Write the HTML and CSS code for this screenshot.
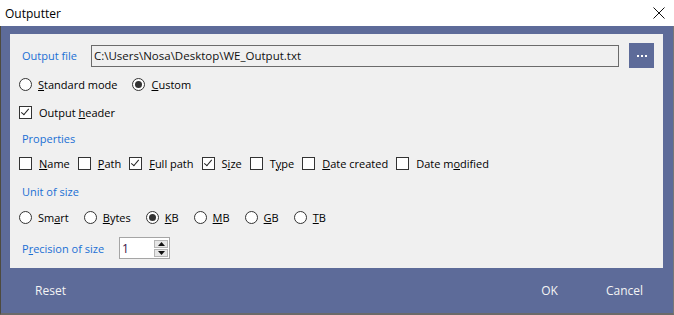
FILE: index.html
```html
<!DOCTYPE html>
<html lang="en">
<head>
    <meta charset="UTF-8">
    <meta name="viewport" content="width=device-width, initial-scale=1.0">
    <title>Outputter</title>
    <link rel="stylesheet" href="styles.css">
</head>
<body>
    <div class="window">
        <div class="titlebar">
            <span class="title">Outputter</span>
            <span class="close">
                <svg width="12" height="12" viewBox="0 0 12 12"><path d="M0.5 0.5 L11.5 11.5 M11.5 0.5 L0.5 11.5" stroke="#111" stroke-width="1" fill="none"/></svg>
            </span>
        </div>

        <div class="client">
            <div class="panel">
                <div class="row file-row">
                    <span class="caption">Output file</span>
                    <div class="path-box">C:\Users\Nosa\Desktop\WE_Output.txt</div>
                    <button class="browse"><span></span><span></span><span></span></button>
                </div>

                <div class="row mode-row">
                    <label class="opt radio"><span class="circle"></span><span><u>S</u>tandard mode</span></label>
                    <label class="opt radio"><span class="circle on"></span><span><u>C</u>ustom</span></label>
                </div>

                <div class="row header-row">
                    <label class="opt check"><span class="box on"></span><span>Output <u>h</u>eader</span></label>
                </div>

                <div class="row caption-row">
                    <span class="caption">Properties</span>
                </div>

                <div class="row props-row">
                    <label class="opt check"><span class="box"></span><span><u>N</u>ame</span></label>
                    <label class="opt check"><span class="box"></span><span><u>P</u>ath</span></label>
                    <label class="opt check"><span class="box on"></span><span><u>F</u>ull path</span></label>
                    <label class="opt check"><span class="box on"></span><span>S<u>i</u>ze</span></label>
                    <label class="opt check"><span class="box"></span><span>T<u>y</u>pe</span></label>
                    <label class="opt check"><span class="box"></span><span><u>D</u>ate created</span></label>
                    <label class="opt check"><span class="box"></span><span>Date m<u>o</u>dified</span></label>
                </div>

                <div class="row caption-row unit-caption">
                    <span class="caption">Unit of size</span>
                </div>

                <div class="row unit-row">
                    <label class="opt radio"><span class="circle"></span><span>Sm<u>a</u>rt</span></label>
                    <label class="opt radio"><span class="circle"></span><span><u>B</u>ytes</span></label>
                    <label class="opt radio"><span class="circle on"></span><span><u>K</u>B</span></label>
                    <label class="opt radio"><span class="circle"></span><span><u>M</u>B</span></label>
                    <label class="opt radio"><span class="circle"></span><span><u>G</u>B</span></label>
                    <label class="opt radio"><span class="circle"></span><span><u>T</u>B</span></label>
                </div>

                <div class="row precision-row">
                    <span class="caption">P<u>r</u>ecision of size</span>
                    <div class="spin">
                        <span class="spin-value">1</span>
                        <div class="spin-buttons">
                            <span class="spin-btn">
                                <svg width="7" height="4" viewBox="0 0 7 4"><path d="M3.5 0 L7 4 L0 4 Z" fill="#111"/></svg>
                            </span>
                            <span class="spin-btn">
                                <svg width="7" height="4" viewBox="0 0 7 4"><path d="M0 0 L7 0 L3.5 4 Z" fill="#111"/></svg>
                            </span>
                        </div>
                    </div>
                </div>
            </div>

            <div class="footer">
                <button class="flat">Reset</button>
                <div class="footer-right">
                    <button class="flat">OK</button>
                    <button class="flat">Cancel</button>
                </div>
            </div>
        </div>
    </div>
</body>
</html>
```

FILE: styles.css
```css
body {
    margin: 0;
    font-family: 'Segoe UI', 'Open Sans', sans-serif;
    font-size: 11px;
    color: #000;
    background: #5d6b99;
}

.window {
    width: 674px;
    height: 315px;
    display: flex;
    flex-direction: column;
}

.titlebar {
    height: 26px;
    background: #fff;
    display: flex;
    align-items: center;
    justify-content: space-between;
    padding: 0 9px 0 5px;
    font-size: 12px;
}

.close {
    display: flex;
}

.client {
    flex: 1;
    background: #5d6b99;
    border-left: 1px solid #4d4a3e;
    border-right: 1px solid #777;
    border-bottom: 2px solid #6a6a6a;
    padding: 8px 10px 0 9px;
    display: flex;
    flex-direction: column;
}

.panel {
    background: #f0f0f0;
    height: 234px;
    box-sizing: border-box;
    padding: 9px 9px 9px 9px;
    display: flex;
    flex-direction: column;
}

.row {
    display: flex;
    align-items: center;
    height: 20px;
}

.caption {
    color: #1a6fd4;
    padding-left: 3px;
}

/* output file */
.file-row {
    height: 25px;
}

.file-row .caption {
    width: 69px;
}

.path-box {
    width: 528px;
    height: 22px;
    box-sizing: border-box;
    border: 1px solid #6b6b6b;
    padding: 0 2px;
    line-height: 19px;
    color: #111;
    font-size: 11.5px;
}

.browse {
    margin-left: 10px;
    width: 25px;
    height: 25px;
    border: none;
    padding: 0;
    background: #5d6b99;
    display: flex;
    align-items: center;
    justify-content: center;
    gap: 2px;
}

.browse span {
    width: 2px;
    height: 2px;
    background: #fff;
}

.mode-row {
    margin-top: 6px;
}

.header-row {
    margin-top: 8px;
}

.caption-row {
    margin-top: 6px;
}

.props-row {
    margin-top: 5px;
}

.unit-caption {
    margin-top: 8px;
}

.unit-row {
    margin-top: 6px;
}

.precision-row {
    margin-top: 10px;
    height: 22px;
}

/* radios and checkboxes */
.opt {
    display: flex;
    align-items: center;
    white-space: nowrap;
}

.opt.radio {
    margin-right: 15px;
}

.opt.check {
    margin-right: 8px;
}

.circle {
    width: 13px;
    height: 13px;
    box-sizing: border-box;
    border: 1px solid #333;
    border-radius: 50%;
    background: #fff;
    margin-right: 6px;
    display: flex;
    align-items: center;
    justify-content: center;
}

.circle.on::after {
    content: "";
    width: 7px;
    height: 7px;
    border-radius: 50%;
    background: #333;
}

.box {
    width: 13px;
    height: 13px;
    box-sizing: border-box;
    border: 1px solid #333;
    background: #fff;
    margin-right: 7px;
    position: relative;
}

.box.on::after {
    content: "";
    position: absolute;
    left: 3px;
    top: 0px;
    width: 3px;
    height: 7px;
    border-right: 1px solid #222;
    border-bottom: 1px solid #222;
    transform: rotate(40deg);
}

/* precision spinner */
.precision-row .caption {
    width: 97px;
}

.spin {
    width: 51px;
    height: 22px;
    box-sizing: border-box;
    border: 1px solid #a5a5a5;
    background: #fff;
    display: flex;
    align-items: center;
    justify-content: space-between;
    padding: 0 1px 0 2px;
}

.spin-value {
    color: #3a1048;
    font-size: 12px;
}

.spin-buttons {
    display: flex;
    flex-direction: column;
    gap: 1px;
}

.spin-btn {
    width: 14px;
    height: 8px;
    box-sizing: border-box;
    border: 1px solid #b5b5b5;
    background: #e6e6e6;
    display: flex;
    align-items: center;
    justify-content: center;
}

/* footer */
.footer {
    flex: 1;
    display: flex;
    align-items: center;
    justify-content: space-between;
    padding: 0 1px 0 3px;
}

.footer-right {
    display: flex;
}

.flat {
    width: 75px;
    height: 26px;
    background: none;
    border: none;
    color: #f4f4f4;
    font-family: inherit;
    font-size: 12px;
    padding: 0;
    cursor: pointer;
}
```
